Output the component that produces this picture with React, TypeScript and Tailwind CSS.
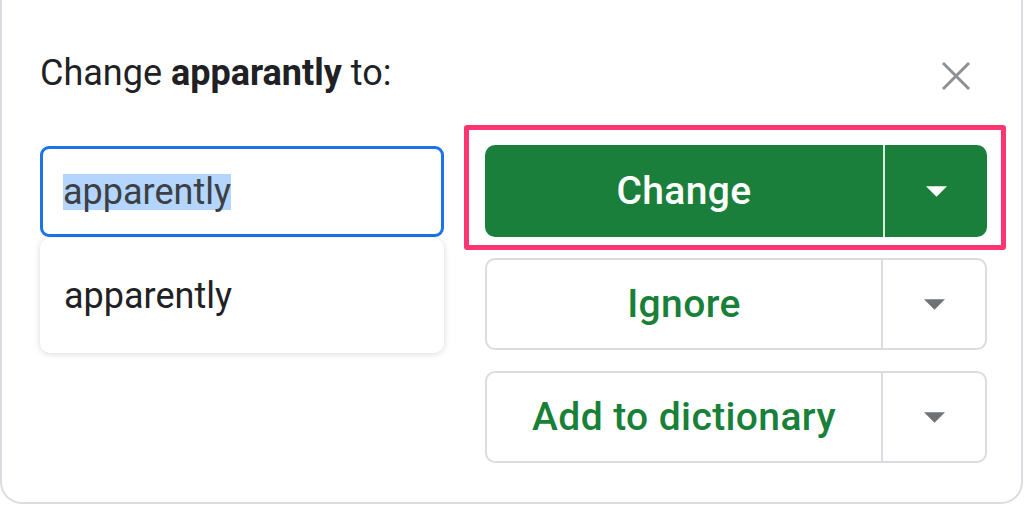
import React from 'react';

const Caret = ({ className }: { className: string }) => (
  <svg viewBox="0 0 22 11" className={className} fill="currentColor">
    <path d="M0 0h22L11 11z" />
  </svg>
);

interface SplitButtonProps {
  label: string;
  primary?: boolean;
}

const SplitButton: React.FC<SplitButtonProps> = ({ label, primary }) => (
  <div
    className={`flex h-[92px] w-[502px] rounded-[10px] ${
      primary ? 'bg-[#1b7f3c] text-white' : 'border-2 border-[#dadce0] bg-white text-[#188038]'
    }`}
  >
    <div className="flex flex-1 items-center justify-center text-[39px] font-medium tracking-[0.01em]">{label}</div>
    <div className={`w-[2px] ${primary ? 'bg-[#d5ebdc]' : 'bg-[#dadce0]'}`} />
    <div className="flex w-[102px] items-center justify-center">
      <Caret className={`h-[11px] w-[21px] ${primary ? 'text-white' : 'text-[#6f7275]'}`} />
    </div>
  </div>
);

export default function App() {
  return (
    <div className="h-[505px] w-[1024px] overflow-hidden bg-white" style={{ fontFamily: 'Roboto, "Noto Sans", sans-serif' }}>
      <div className="h-[504px] w-[1023px] rounded-b-[22px] border-2 border-t-0 border-[#dadce0] bg-white pl-[38px] pt-[53px]">
        {/* Header */}
        <div className="flex w-[930px] items-center justify-between">
          <h1 className="text-[36px] leading-[40px] text-[#202124]">
            Change <span className="font-bold">apparantly</span> to:
          </h1>
          <svg viewBox="0 0 28 28" className="mt-[6px] h-[28px] w-[28px]" stroke="#8e9194" strokeWidth={3} strokeLinecap="square">
            <path d="M2 2l24 24M26 2L2 26" />
          </svg>
        </div>

        {/* Body */}
        <div className="mt-[52px] flex items-start gap-[41px]">
          <div className="mt-px flex w-[404px] flex-col">
            <div className="flex h-[91px] items-center rounded-[9px] border-[3px] border-[#1a73e8] px-[20px]">
              <span className="bg-[#b4d5fe] text-[36px] leading-none text-[#3c4043]">apparently</span>
            </div>
            <div className="mt-px flex h-[115px] items-center rounded-[10px] bg-white pl-[24px] text-[36px] text-[#202124] shadow-[0_1px_6px_rgba(60,64,67,0.2)]">
              apparently
            </div>
          </div>

          <div className="flex flex-col gap-[21px]">
            <div className="relative">
              <SplitButton label="Change" primary />
              <div className="pointer-events-none absolute -bottom-[13px] -left-[21px] -right-[19px] -top-[20px] rounded-[3px] border-[5px] border-[#fe3571]" />
            </div>
            <SplitButton label="Ignore" />
            <SplitButton label="Add to dictionary" />
          </div>
        </div>
      </div>
    </div>
  );
}
